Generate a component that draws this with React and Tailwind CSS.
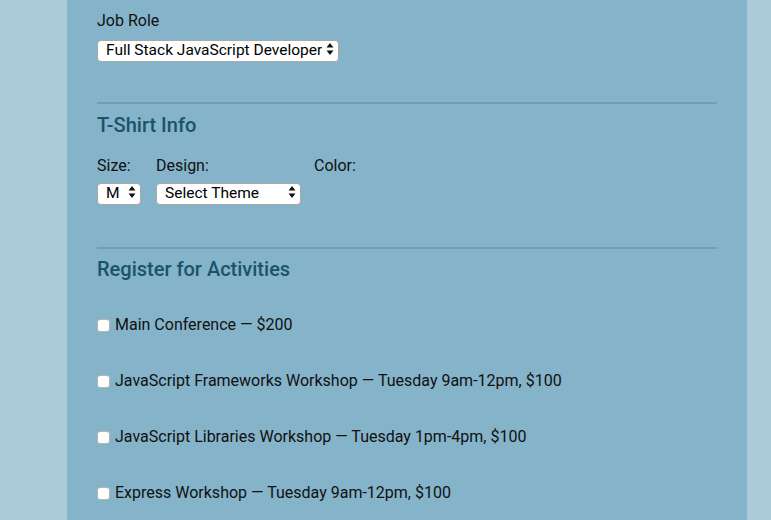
import { useState } from 'react';

const Arrows = () => (
  <svg width="8" height="13" viewBox="0 0 8 13" className="pointer-events-none absolute right-[5px] top-1/2 -translate-y-1/2">
    <path d="M4 0.5 L7.5 5 L0.5 5 Z" fill="#111" />
    <path d="M4 12.5 L7.5 8 L0.5 8 Z" fill="#111" />
  </svg>
);

const Select = ({ value, options, className }) => (
  <div className={`relative h-[22px] ${className}`}>
    <select
      defaultValue={value}
      className="h-full w-full appearance-none rounded-[4px] border border-[#a9a9a9] bg-white pl-[8px] pr-[16px] text-[15.5px] leading-none text-black outline-none"
    >
      {options.map((o) => (
        <option key={o}>{o}</option>
      ))}
    </select>
    <Arrows />
  </div>
);

const activities = [
  'Main Conference — $200',
  'JavaScript Frameworks Workshop — Tuesday 9am-12pm, $100',
  'JavaScript Libraries Workshop — Tuesday 1pm-4pm, $100',
  'Express Workshop — Tuesday 9am-12pm, $100',
];

const Activity = ({ label }) => {
  const [checked, setChecked] = useState(false);
  return (
    <label className="flex h-[56px] items-center gap-[5px] text-[16px]">
      <input
        type="checkbox"
        checked={checked}
        onChange={() => setChecked(!checked)}
        className="h-[13px] w-[13px] appearance-none rounded-[3px] border border-[#b5b5b5] bg-white checked:bg-sky-600"
      />
      <span>{label}</span>
    </label>
  );
};

export default function App() {
  return (
    <div className="flex h-[520px] w-full overflow-hidden bg-[#aacbd9] font-['Roboto',sans-serif] text-[#111]">
      <div className="ml-[67px] w-[680px] shrink-0 bg-[#84b3ca] px-[30px]">
        <div className="flex flex-col">
          <div className="pt-[11px] text-[16px] leading-[20px]">Job Role</div>
          <Select
            value="Full Stack JavaScript Developer"
            options={['Full Stack JavaScript Developer', 'Front End Developer', 'Back End Developer']}
            className="mt-[7px] w-[242px]"
          />
        </div>

        <div className="mt-[42px] h-[2px] w-[620px] bg-[#6d9fb8]" />
        <h2 className="mt-[9px] text-[20px] font-medium leading-[24px] text-[#1b5369]">T-Shirt Info</h2>
        <div className="mt-[19px] flex gap-[15px] text-[16px]">
          <div className="flex flex-col gap-[5px]">
            <span className="leading-[20px]">Size:</span>
            <Select value="M" options={['S', 'M', 'L', 'XL']} className="w-[44px]" />
          </div>
          <div className="flex flex-col gap-[5px]">
            <span className="leading-[20px]">Design:</span>
            <Select value="Select Theme" options={['Select Theme', 'JS Puns', 'I ♥ JS']} className="w-[145px]" />
          </div>
          <div className="ml-[-2px] flex flex-col">
            <span className="leading-[20px]">Color:</span>
          </div>
        </div>

        <div className="mt-[44px] h-[2px] w-[620px] bg-[#6d9fb8]" />
        <h2 className="mt-[8px] text-[20px] font-medium leading-[24px] text-[#1b5369]">Register for Activities</h2>
        <div className="mt-[16px] flex flex-col">
          {activities.map((a) => (
            <Activity key={a} label={a} />
          ))}
        </div>
      </div>
    </div>
  );
}
